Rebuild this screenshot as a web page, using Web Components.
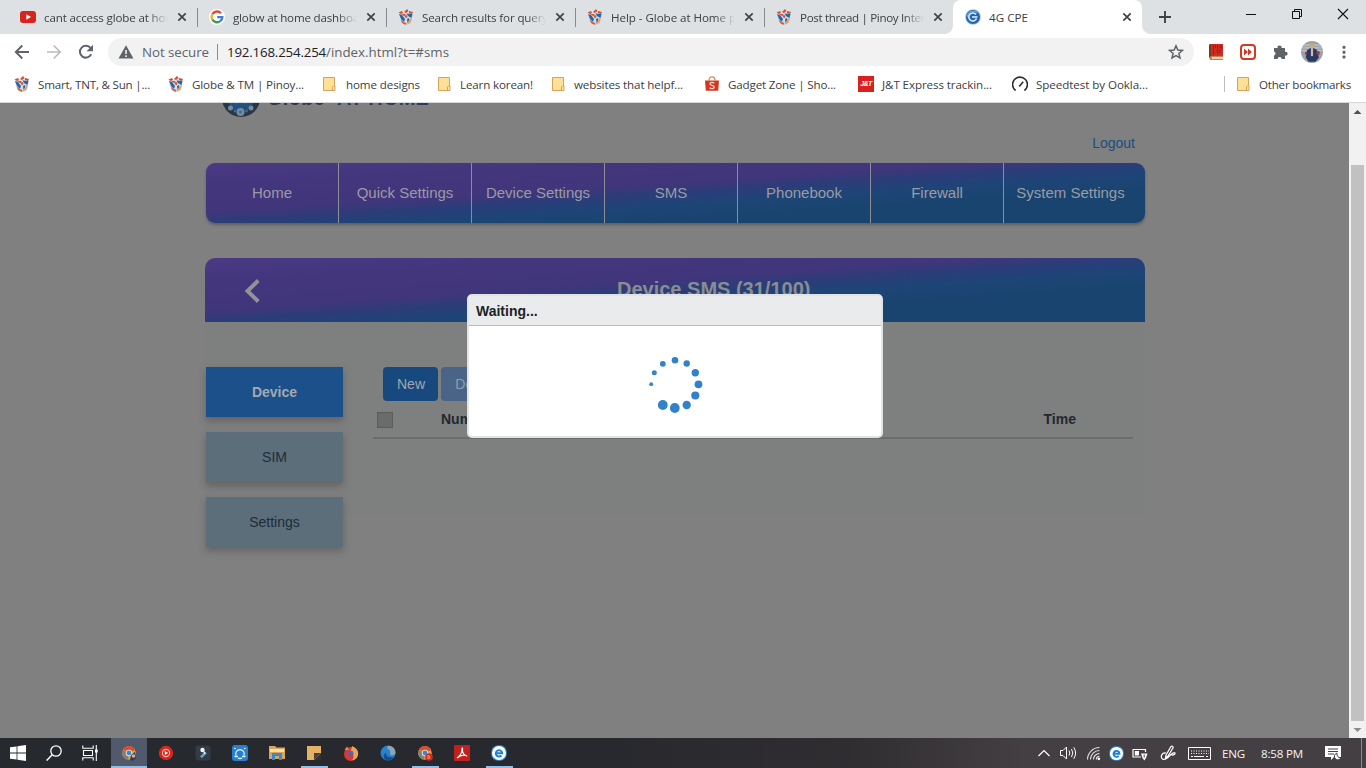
<!DOCTYPE html>
<html lang="en">
<head>
<meta charset="utf-8">
<title>4G CPE</title>
<style>
  html, body { margin: 0; height: 100%; overflow: hidden; background: #808080; }
  body { font-family: "Open Sans", "Noto Sans", sans-serif; font-size: 11.6px; color: #3c4043; }
</style>
</head>
<body>
<app-desktop></app-desktop>

<script>
const globeFav = `
  <path d="M.5 3.5L4 2l2 1.500L9 0l2 2 4 1-.5 3L14 10l-2 4-4 2-4-2-2-4z" fill="#d9dfe6"/>
  <path d="M.5 3.500L4 2l1 2-2 1zM6 3l3-3 1.500 2L8 4zM11 2l4 1-1 2-3-1zM3 5l4 0 1 1.500-2 .5z" fill="#d4502e"/>
  <path d="M1 5l3 1 3 4-1 3-3-3zM8.500 4.500L14.500 5l-1 4-2-1-1.500-1zM9 10l2-1 .5 3-2 2z" fill="#2468aa"/>
  <path d="M2.500 10.500l3 2.500 3 1-1 2-3.500-2zM6.500 7L8 9.500 9.500 8 9 6z" fill="#cf5a3c"/>
  <path d="M10 13l2.500-4 1.500.5-1.500 4.500L8.500 16z" fill="#dba577"/>`;

const chromeArt = `
  <circle cx="8" cy="8" r="6.8" fill="#e3a34a"/>
  <path d="M8 8L2 4.6A6.9 6.9 0 0 1 14.2 5z" fill="#d9502f"/>
  <path d="M8 8l-1 6.8A6.9 6.9 0 0 1 1.8 5z" fill="#8a7f6c"/>
  <circle cx="8" cy="8" r="3.2" fill="#e8eef6"/><circle cx="8" cy="8" r="2.4" fill="#3a85d0"/>`;

const eArt = `
  <rect x=".3" y=".3" width="15.4" height="15.4" rx="6.5" fill="#2c8ad6"/>
  <circle cx="8" cy="8" r="7" fill="#fff"/>
  <path d="M5 8.200h6.200A3.200 3.200 0 1 0 10.400 10.500" fill="none" stroke="#1f80cf" stroke-width="2"/>`;

const ICONS = {
  youtube: `<rect y="2" width="16" height="12" rx="3" fill="#d9231f"/><path d="M6.3 5.2v5.6L11 8z" fill="#fff"/>`,
  google: `<circle cx="8" cy="8" r="8" fill="#fff"/><g fill="none" stroke-width="2.4">
    <path d="M12 4.2A5.3 5.3 0 0 0 3.4 5.3" stroke="#df4a38"/><path d="M3.4 5.3a5.3 5.3 0 0 0 0 5.4" stroke="#efb336"/>
    <path d="M3.4 10.7a5.3 5.3 0 0 0 7.9 1.4" stroke="#3c9b57"/><path d="M8.2 8.1h5.1a5.3 5.3 0 0 1-2 4" stroke="#3f7fdc"/></g>`,
  forum: globeFav,
  cpe: `<circle cx="8" cy="8" r="7.800" fill="#9cc0e0"/><circle cx="8" cy="8" r="7" fill="#2467ab"/>
    <path d="M12.500 4A5.800 5.800 0 0 0 2.500 8" fill="none" stroke="#68a4d8" stroke-width="1.300"/>
    <path d="M11 5.500A4 4 0 1 0 11.500 9.500M7 8h5.500" fill="none" stroke="#e3eff9" stroke-width="1.500"/>`,
  close: `<path d="M4.3 4.3l7.4 7.4M11.7 4.3l-7.4 7.4" stroke="#3f4347" stroke-width="1.7"/>`,
  plus: `<path d="M8 2v12M2 8h12" stroke="#3f4347" stroke-width="1.9"/>`,
  min: `<path d="M3 8.5h10" stroke="#111"/>`,
  restore: `<path d="M3.5 5.5h7v7h-7zM5.5 5.5v-2h7v7h-2" fill="none" stroke="#111"/>`,
  winclose: `<path d="M3 3l10 10M13 3L3 13" stroke="#111" stroke-width="1.1"/>`,
  back: `<path d="M15 8H2M8.3 1.5L1.8 8l6.5 6.5" fill="none" stroke="#5f6368" stroke-width="1.9"/>`,
  forward: `<path d="M1 8h13M7.7 1.5L14.2 8l-6.5 6.5" fill="none" stroke="#b9bbbe" stroke-width="1.7"/>`,
  reload: `<path d="M13.2 10.2A5.9 5.9 0 1 1 12.6 4.2" fill="none" stroke="#5f6368" stroke-width="2"/><path d="M15 .8v6.4H8.6z" fill="#5f6368"/>`,
  warn: `<path d="M8 1.3L15.5 14.5H.5z" fill="#5f6368"/><path d="M8 6v4M8 11.3V13" stroke="#f1f1f1" stroke-width="1.6"/>`,
  star: `<path d="M8 1.8l1.8 4.2 4.6.4-3.5 3 1.1 4.5L8 11.5l-4 2.4 1.1-4.5-3.5-3L6.2 6z" fill="none" stroke="#5f6368" stroke-width="1.5"/>`,
  book: `<path d="M1.500 0H15v12H1.500z" fill="#d52b1e"/><path d="M1 1l2-1v13l-2 1z" fill="#6d3a33"/><path d="M1 13.500L3 12h12v1H4v1.500h11V16H2z" fill="#c9804f"/><path d="M4 13.200h11v1.300H4z" fill="#f0d8b4"/><path d="M5.500 1v10M7.500 1v3M9.500 1v4M12 1v3M13.500 2v3M8 7l5-1M9 9l4-1" stroke="#8e1a13" stroke-width=".8"/>`,
  skip: `<rect x="1" y="1" width="14" height="14" rx="3" fill="#fff" stroke="#d33a22" stroke-width="2"/><path d="M4 4.500L8 8l-4 3.500zM8 4.500L12 8l-4 3.500z" fill="#d33a22"/>`,
  puzzle: `<path d="M2 4h3.6a2 2 0 1 1 3.9 0H13v3.8a2 2 0 1 1 0 3.8V15H9.6a2 2 0 0 0-4 0H2v-3.6a2 2 0 0 0 0-3.9z" fill="#5f6368"/>`,
  avatar: `<circle cx="8" cy="8" r="8" fill="#9ea3aa"/><path d="M1 5h14M2 3h12M.5 7H4M12 7h3.500" stroke="#c9ccd1" stroke-width=".7"/>
    <path d="M4.500 6.500L7 5h2l2.500 1.500L13 12l-2.500 3h-5L3.500 12z" fill="#273a66"/><circle cx="8" cy="3.500" r="1.600" fill="#c9b06c"/>
    <path d="M7.200 5h1.600v6H7.200z" fill="#cdb9b2"/><path d="M11 7.500h2.500V10H11zM3 8h1.500v2H3z" fill="#8b3c44"/>`,
  dots: `<g fill="#5f6368"><rect x="6.5" y="1.8" width="3" height="3" rx="1"/><rect x="6.5" y="6.7" width="3" height="3" rx="1"/><rect x="6.5" y="11.6" width="3" height="3" rx="1"/></g>`,
  folder: `<path d="M2.5 1.5h11v13h-11z" fill="#ffe097" stroke="#d3a35c"/><path d="M11.5 14.5v-3.5l1-1h1.5v4.5z" fill="#ffe7ad" stroke="#d3a35c"/>`,
  shopee: `<path d="M1 4.5h14l-.8 10.2H1.8z" fill="#d6361f"/><path d="M5 4.5a3 3.600 0 0 1 6 0" fill="none" stroke="#d58b5c" stroke-width="1.300"/><path d="M10.300 7.200C9 6 6 6.200 6 7.800s4.300 1.400 4.300 3.200-3 2.200-4.700.7" fill="none" stroke="#f6d5c6" stroke-width="1.300"/>`,
  gauge: `<path d="M3.600 14.500a7.400 7.400 0 1 1 8.800 0" fill="none" stroke="#2b2d33" stroke-width="1.600"/><path d="M7.200 10.600l4-4.800" stroke="#2b2d33" stroke-width="1.600"/>`,

  win: `<path d="M0 2.3L6.6 1.4v6.2H0zM7.4 1.3L16 0v7.6H7.4zM0 8.4h6.6v6.2L0 13.7zM7.4 8.4H16V16l-8.6-1.2z" fill="#fff"/>`,
  search: `<circle cx="10" cy="6" r="5.2" fill="none" stroke="#fff" stroke-width="1.3"/><path d="M6.2 9.8L.6 15.6" stroke="#fff" stroke-width="1.4"/>`,
  tasks: `<path d="M.8.5v2.700h10.400V.5M.8 15.500v-2.700h10.400v2.700M1.500 5.500h9v5h-9zM14.300 0v16" fill="none" stroke="#fff" stroke-width="1.100"/><path d="M13 4.500h2.700v3H13z" fill="#fff"/>`,
  chrome: chromeArt + `<path d="M10 10l4-3 1 6-3 3-3-1z" fill="#29405f"/><circle cx="12.5" cy="11" r="1.8" fill="#d7b08e"/>`,
  chrome2: chromeArt + `<circle cx="12" cy="12" r="3.8" fill="#d42a20"/><path d="M11 14v-4l2 2-1 2" stroke="#f3b3a0" stroke-width=".8" fill="none"/>`,
  ytmusic: `<circle cx="8" cy="8" r="7.2" fill="#d8261e"/><circle cx="8" cy="8" r="3.600" fill="none" stroke="#f4c0a8" stroke-width="1.100"/><path d="M6.800 6v4L10.200 8z" fill="#fff"/>`,
  filmora: `<rect x=".5" y=".5" width="15" height="15" rx="3" fill="#333b46"/><path d="M5 11.500L9 7.500l3 .5-5 5z" fill="#69a9c4"/><circle cx="7.500" cy="5" r="2.200" fill="#f3f7fa"/><path d="M8 5l3 3-2 1.500z" fill="#e3ecf2"/>`,
  share: `<rect width="16" height="16" rx="3" fill="#2680cf"/><g fill="none" stroke="#e6f4ff" stroke-width="1.300"><path d="M4 10.500a4.300 4.300 0 1 1 8 0M2.500 11.500h3.500M10 11.500h3.500M6 13q2 1 4 0"/></g><circle cx="3" cy="3.500" r=".8" fill="#fff"/><circle cx="12.800" cy="3.500" r=".8" fill="#fff"/>`,
  explorer: `<path d="M0 1h6l1.500 1.500H16V14H0z" fill="#d9a75c"/><path d="M1 4h14v3H1z" fill="#ffe09a"/><path d="M3 15V8h10v7h-3v-4H6v4z" fill="#3d87c8"/>`,
  notes: `<path d="M1 1h14v9l-5 5H1z" fill="#e7b163"/><path d="M15 8v7H8z" fill="#34302d"/><path d="M8 8h7l-7 7z" fill="#4a4038"/>`,
  firefox: `<circle cx="8" cy="9" r="7" fill="#d93a2c"/><path d="M9 1c4 2 7 4.500 6 9-1 4-4 5-6 5 3-3 1-6-1-7C7 5 9 4 9 1z" fill="#e9a45c"/><path d="M1.500 5L4 1.500 6 5z" fill="#e38a47"/><circle cx="7.500" cy="8.500" r="3" fill="#6b5ba0"/>`,
  edge: `<circle cx="8" cy="8" r="7.500" fill="#2682cf"/><path d="M8 .8c5 0 8 3.500 7.500 7.700C14 11 10 10.500 10 9c1-3-1-5-3-5z" fill="#8ba7b4"/><path d="M6 8c0 4 3.500 5 8 4-2 3-5 4-8 3-3-1.500-3-6 0-7z" fill="#174f8a"/>`,
  acrobat: `<rect width="16" height="16" rx="1" fill="#c3201d"/><path d="M3 13c3-2 5-6 5-9 0-2 1-1 .5 1C8 8 11 11 13 11c-3-1.500-7-.5-10 2z" fill="none" stroke="#fff" stroke-width="1.100"/>`,
  ebadge: eArt,

  up: `<path d="M2.500 11L8 5.500l5.500 5.500" fill="none" stroke="#fff" stroke-width="1.200"/>`,
  sound: `<g fill="none" stroke="#fff"><path d="M.5 5.500h2.500l3.500-3.500v12L3 10.500H.5zM9 5.500q1.600 2.500 0 5M11.500 4q2.600 4 0 8M13.800 2.300q3.600 5.700 0 11.400"/></g>`,
  wifi: `<g fill="none" stroke="#fff" stroke-width="1.100"><path d="M2.500 14.500A12 12 0 0 1 14.500 2.500M5.500 14.500a9 9 0 0 1 9-9M8.500 14.500a6 6 0 0 1 6-6M11.300 14.500a3.200 3.200 0 0 1 3.200-3.200" opacity=".85"/></g><circle cx="13.800" cy="13.800" r="1.400" fill="#fff"/>`,
  battery: `<path d="M13.500 7V4.500H1V12h8" fill="none" stroke="#fff" stroke-width="1.200"/><path d="M2.800 6H7v4.500H2.800zM9 8.500h6.500L14 13l-1.700 2.500L10.500 13z" fill="#fff"/><path d="M12.200 9.500v3" stroke="#433f42"/>`,
  pen: `<g fill="none" stroke="#fff" stroke-width="1.200"><path d="M6 10L11 1.500q2-1 2.200 1L8 11l-2.500 2zM6 8c-4-1-6 4-3.500 6 3 2 6-2 8-4s5-3 4.500-1.500-2.500 2-3.500 1"/></g>`,
};

// Inline SVG icon: name picks the drawing, size is the square side in pixels
class UiIcon extends HTMLElement {
  constructor() {
    super();
    this.attachShadow({ mode: 'open' });
  }

  connectedCallback() {
    const size = this.getAttribute('size') || 16;
    this.shadowRoot.innerHTML = `
      <style>
        :host { display: block; flex: none; width: ${size}px; height: ${size}px; }
        svg { display: block; }
      </style>
      <svg width="${size}" height="${size}" viewBox="0 0 16 16">${ICONS[this.getAttribute('name')] || ''}</svg>
    `;
  }
}
customElements.define('ui-icon', UiIcon);

// One line of text, tracked so that it is exactly "w" pixels wide
class UiLabel extends HTMLElement {
  constructor() {
    super();
    this.attachShadow({ mode: 'open' });
    this.shadowRoot.innerHTML = `
      <style>
        :host { display: block; flex: none; white-space: nowrap; }
        span { display: inline-block; }
      </style>
      <span><slot></slot></span>
    `;
  }

  connectedCallback() {
    const w = parseFloat(this.getAttribute('w'));
    if (!w) return;
    const span = this.shadowRoot.querySelector('span');
    const count = this.textContent.length;
    span.style.letterSpacing = `${(w - span.getBoundingClientRect().width) / count}px`;
    this.style.width = `${w}px`;
  }
}

class BrowserTab extends HTMLElement {
  constructor() {
    super();
    this.attachShadow({ mode: 'open' });
  }

  connectedCallback() {
    this.shadowRoot.innerHTML = `
      <style>
        :host {
          display: flex;
          align-items: center;
          box-sizing: border-box;
          position: relative;
          width: 189px;
          height: 34px;
          padding: 0 7px 0 12px;
        }
        .title {
          flex: 1;
          min-width: 0;
          margin-left: 8px;
          overflow: hidden;
          -webkit-mask-image: linear-gradient(to right, #000 84%, transparent);
        }
        ui-icon[name="close"] { margin-left: 6px; }
        :host(:not([active]))::after {
          content: "";
          position: absolute;
          right: -1px;
          top: 8px;
          height: 19px;
          border-right: 1px solid #868b90;
        }
        :host([last])::after { display: none; }
        :host([active]) { background: #fff; border-radius: 8px 8px 0 0; }
        :host([active]) .title { -webkit-mask-image: none; }
        /* flared feet of the selected tab */
        :host([active])::before {
          content: "";
          position: absolute;
          left: -8px;
          right: -8px;
          bottom: 0;
          height: 8px;
          background:
            radial-gradient(circle at 0 0, transparent 7.500px, #fff 8px) left / 8px 8px no-repeat,
            radial-gradient(circle at 100% 0, transparent 7.500px, #fff 8px) right / 8px 8px no-repeat;
        }
      </style>
      <ui-icon name="${this.getAttribute('icon')}"></ui-icon>
      <div class="title"><slot></slot></div>
      <ui-icon name="close"></ui-icon>
    `;
  }
}
customElements.define('browser-tab', BrowserTab);

class BookmarkItem extends HTMLElement {
  constructor() {
    super();
    this.attachShadow({ mode: 'open' });
  }

  connectedCallback() {
    const icon = this.getAttribute('icon');
    const art = icon ? `<ui-icon name="${icon}"></ui-icon>` : '<span class="jt">J&amp;T</span>';
    this.shadowRoot.innerHTML = `
      <style>
        :host { display: flex; align-items: center; gap: 8px; }
        .jt {
          width: 16px;
          height: 16px;
          background: #d8201f;
          color: #fff;
          font: italic bold 7px/16px "Liberation Sans", sans-serif;
          text-align: center;
          letter-spacing: -0.5px;
        }
      </style>
      ${art}<slot></slot>
    `;
  }
}
customElements.define('bookmark-item', BookmarkItem);

class BrowserChrome extends HTMLElement {
  constructor() {
    super();
    this.attachShadow({ mode: 'open' });
    this.shadowRoot.innerHTML = `
      <style>
        :host { display: block; height: 103px; background: #fff; box-sizing: border-box; border-bottom: 1px solid #d5d7d9; }
        .tabs { display: flex; align-items: center; height: 34px; padding-left: 8px; background: #dee1e4; }
        .new { margin-left: 15px; }
        .window { display: flex; margin: -6px 0 0 auto; }
        .window div { width: 46px; display: flex; justify-content: center; }
        .bar { display: flex; align-items: center; height: 35px; padding: 0 14px; }
        .bar > ui-icon { margin-right: 16px; }
        .omni {
          display: flex;
          align-items: center;
          flex: none;
          box-sizing: border-box;
          width: 1086px;
          height: 28px;
          margin: 1px 14px 0 -2px;
          padding: 0 10px;
          border-radius: 14px;
          background: #f2f2f2;
          font-size: 13.3px;
          color: #5f6368;
        }
        .omni .warn { margin-right: 8px; }
        .omni .rule { width: 1px; height: 16px; margin: 0 9px 0 8px; background: #8a8d91; }
        .host { color: #202124; }
        .omni .star { margin-left: auto; }
        .ext { display: flex; align-items: center; }
        .ext ui-icon { margin-right: 16px; }
        .marks { display: flex; align-items: center; height: 30px; padding: 0 15px 0 14px; }
        .side { margin-left: auto; padding-left: 10px; border-left: 1px solid #bbbdc0; }
      </style>
      <div class="tabs">
        <browser-tab icon="youtube"><ui-label w="132">cant access globe at hom</ui-label></browser-tab>
        <browser-tab icon="google"><ui-label w="126">globw at home dashboa</ui-label></browser-tab>
        <browser-tab icon="forum"><ui-label w="126">Search results for query</ui-label></browser-tab>
        <browser-tab icon="forum"><ui-label w="125">Help - Globe at Home p</ui-label></browser-tab>
        <browser-tab icon="forum" last><ui-label w="125">Post thread | Pinoy Inter</ui-label></browser-tab>
        <browser-tab icon="cpe" active><ui-label w="39">4G CPE</ui-label></browser-tab>
        <ui-icon class="new" name="plus"></ui-icon>
        <div class="window">
          <div><ui-icon name="min"></ui-icon></div>
          <div><ui-icon name="restore"></ui-icon></div>
          <div><ui-icon name="winclose"></ui-icon></div>
        </div>
      </div>
      <div class="bar">
        <ui-icon name="back"></ui-icon>
        <ui-icon name="forward"></ui-icon>
        <ui-icon name="reload"></ui-icon>
        <div class="omni">
          <ui-icon class="warn" name="warn"></ui-icon>
          <ui-label w="67">Not secure</ui-label>
          <div class="rule"></div>
          <ui-label class="host" w="99">192.168.254.254</ui-label>
          <ui-label w="123">/index.html?t=#sms</ui-label>
          <ui-icon class="star" name="star"></ui-icon>
        </div>
        <div class="ext">
          <ui-icon name="book"></ui-icon>
          <ui-icon name="skip"></ui-icon>
          <ui-icon name="puzzle" style="margin-right: 13px"></ui-icon>
          <ui-icon name="avatar" size="22" style="margin-right: 13px"></ui-icon>
          <ui-icon name="dots" style="margin: 0"></ui-icon>
        </div>
      </div>
      <div class="marks">
        <bookmark-item icon="forum" style="margin-right: 18px"><ui-label w="112">Smart, TNT, &amp; Sun |...</ui-label></bookmark-item>
        <bookmark-item icon="forum" style="margin-right: 17px"><ui-label w="112">Globe &amp; TM | Pinoy...</ui-label></bookmark-item>
        <bookmark-item icon="folder" style="gap: 9px; margin-right: 16px"><ui-label w="74">home designs</ui-label></bookmark-item>
        <bookmark-item icon="folder" style="margin-right: 17px"><ui-label w="73">Learn korean!</ui-label></bookmark-item>
        <bookmark-item icon="folder" style="margin-right: 21px"><ui-label w="109">websites that helpf...</ui-label></bookmark-item>
        <bookmark-item icon="shopee" style="margin-right: 22px"><ui-label w="108">Gadget Zone | Sho...</ui-label></bookmark-item>
        <bookmark-item style="margin-right: 20px"><ui-label w="110">J&amp;T Express trackin...</ui-label></bookmark-item>
        <bookmark-item icon="gauge"><ui-label w="112">Speedtest by Ookla...</ui-label></bookmark-item>
        <bookmark-item class="side" icon="folder"><ui-label w="92">Other bookmarks</ui-label></bookmark-item>
      </div>
    `;
  }
}

class PageNav extends HTMLElement {
  constructor() {
    super();
    this.attachShadow({ mode: 'open' });
    const items = ['Home', 'Quick Settings', 'Device Settings', 'SMS', 'Phonebook', 'Firewall', 'System Settings'];
    this.shadowRoot.innerHTML = `
      <style>
        :host {
          display: flex;
          height: 60px;
          margin-left: 1px;
          border-radius: 9px;
          background: var(--brand);
          box-shadow: 0 2px 3px rgba(40, 45, 50, 0.4);
          font-size: 15px;
          color: #9b9ba3;
        }
        a { box-sizing: border-box; width: 133px; line-height: 60px; text-align: center; border-right: 1px solid #8d8d98; }
        a:last-child { border: 0; }
      </style>
      ${items.map(item => `<a>${item}</a>`).join('')}
    `;
  }
}
customElements.define('page-nav', PageNav);

class SideButton extends HTMLElement {
  constructor() {
    super();
    this.attachShadow({ mode: 'open' });
    this.shadowRoot.innerHTML = `
      <style>
        :host {
          display: block;
          height: 50px;
          line-height: 50px;
          text-align: center;
          background: #5c6e79;
          color: #1c2c3a;
          box-shadow: 0 4px 7px rgba(70, 64, 64, 0.45);
        }
        :host([active]) { background: #1b508a; color: #a3a9b0; font-weight: bold; }
      </style>
      <slot></slot>
    `;
  }
}
customElements.define('side-button', SideButton);

class WaitDialog extends HTMLElement {
  constructor() {
    super();
    this.attachShadow({ mode: 'open' });
    const dots = [
      [24, 0.3, 3.3], [35.7, 3.5, 3.2], [44.3, 12.8, 3.7], [47.5, 24.3, 3.9],
      [44.3, 35.5, 4.1], [35.7, 45, 4.2], [23.8, 48, 4.9], [11.8, 45, 4.9],
      [0.2, 24.2, 1.9], [3.3, 12.8, 2.5], [11.8, 3.8, 2.9],
    ];
    this.shadowRoot.innerHTML = `
      <style>
        :host {
          display: flex;
          flex-direction: column;
          box-sizing: border-box;
          width: 416px;
          height: 144px;
          border: 2px solid #e1e3e5;
          border-radius: 5px;
          background: #fff;
        }
        header {
          height: 29px;
          line-height: 30px;
          padding-left: 7px;
          background: #e9ebed;
          border-bottom: 1px solid #b9bbbd;
          font-weight: bold;
          color: #222;
        }
        svg { display: block; margin: 29px 0 0 176px; }
      </style>
      <header><slot></slot></header>
      <svg width="62" height="62" viewBox="-6 -5 62 62" fill="#3181cb">
        ${dots.map(([x, y, r]) => `<circle cx="${x}" cy="${y}" r="${r}"/>`).join('')}
      </svg>
    `;
  }
}
customElements.define('wait-dialog', WaitDialog);

class RouterPage extends HTMLElement {
  constructor() {
    super();
    this.attachShadow({ mode: 'open' });
    this.shadowRoot.innerHTML = `
      <style>
        :host {
          --brand: linear-gradient(to bottom right, #4a3a84 0%, #43367d 20%, #41357b 41%, #2b3d79 50%, #1d4577 60%, #19446f 72%, #19446f 100%);
          display: flex;
          position: relative;
          flex: 1;
          min-height: 0;
          overflow: hidden;
          background: #808080;
          font-family: "Liberation Sans", Arial, sans-serif;
          font-size: 14px;
        }
        .page { width: 940px; margin: 0 204px 0 205px; }
        .head { display: flex; height: 60px; align-items: flex-start; padding-left: 16px; box-sizing: border-box; }
        .head svg { margin-top: -25px; }
        .brand { display: flex; gap: 12px; margin: -16px 0 0 6px; font-size: 20px; line-height: 23px; font-weight: bold; color: #2f3849; }
        .brand ui-label + ui-label { color: #2c3a60; }
        .logout { position: absolute; top: 32px; right: 231px; color: #164f80; line-height: 16px; }
        .panel { margin-top: 35px; height: 257px; background: #7e7f7f; border-radius: 10px 10px 0 0; }
        .title { display: flex; align-items: center; height: 64px; border-radius: 10px 10px 0 0; background: var(--brand); }
        .title svg { margin: 1px 0 0 39px; }
        h1 { margin: -2px 0 0 357px; font-size: 20px; color: #8c8c93; }
        .body { display: flex; padding: 45px 12px 0 1px; }
        nav { display: flex; flex-direction: column; gap: 15px; width: 137px; }
        .main { flex: 1; margin-left: 30px; }
        .actions { display: flex; gap: 3px; padding-left: 10px; }
        .btn { box-sizing: border-box; width: 55px; padding-left: 1px; line-height: 34px; border-radius: 4px; text-align: center; background: #17497e; color: #a1a7ad; }
        .btn.off { width: 68px; background: #4a6487; color: #8f9fb2; }
        .row { display: flex; align-items: center; height: 36px; border-bottom: 2px solid #6c6d6d; font-weight: bold; color: #22282e; }
        .row i { width: 14px; height: 14px; border: 1px solid #5c5c5c; background: #6b6b6b; margin: 1px 48px 0 4px; }
        .row b:last-child { margin-left: auto; margin-right: 57px; }
        .scroll { display: flex; flex-direction: column; align-items: center; width: 17px; background: #f1f1f1; }
        .thumb { width: 13px; height: 556px; margin-top: 45px; background: #c1c1c1; }
        .arrow { height: 17px; display: block; }
        wait-dialog { position: absolute; left: 467px; top: 191px; }
      </style>
      <div class="page">
        <div class="head">
          <svg width="40" height="40" viewBox="0 0 40 40">
            <circle cx="20" cy="20" r="19" fill="#283544"/>
            <circle cx="20" cy="20" r="12.500" fill="#27608f"/>
            <path d="M8 22l7 8 5-3 5 3 7-8" fill="none" stroke="#1d5384" stroke-width="5"/>
            <g fill="#768a99"><circle cx="19.500" cy="34" r="4"/><circle cx="9.500" cy="30" r="2.500"/><circle cx="30" cy="30" r="2.500"/></g>
            <g fill="#3a6c93"><circle cx="19.500" cy="34" r="1.500"/><circle cx="14" cy="33" r="1.500"/><circle cx="25.500" cy="33" r="1.500"/></g>
          </svg>
          <div class="brand"><ui-label w="58">Globe</ui-label><ui-label w="92">AT HOME</ui-label></div>
        </div>
        <a class="logout">Logout</a>
        <page-nav></page-nav>
        <div class="panel">
          <div class="title">
            <svg width="16" height="24" viewBox="0 0 16 24"><path d="M14.300 1.500L3.500 12l10.800 10.500" fill="none" stroke="#929297" stroke-width="4"/></svg>
            <h1>Device SMS (31/100)</h1>
          </div>
          <div class="body">
            <nav>
              <side-button active>Device</side-button>
              <side-button>SIM</side-button>
              <side-button>Settings</side-button>
            </nav>
            <div class="main">
              <div class="actions"><div class="btn">New</div><div class="btn off">Delete</div></div>
              <div class="row"><i></i><b>Number</b><b>Time</b></div>
            </div>
          </div>
        </div>
      </div>
      <div class="scroll">
        <svg class="arrow" width="17"><path d="M4.500 11L8.500 7l4 4z" fill="#505050"/></svg>
        <div class="thumb"></div>
        <svg class="arrow" width="17"><path d="M4.500 7l4 4 4-4z" fill="#8a8a8a"/></svg>
      </div>
      <wait-dialog>Waiting...</wait-dialog>
    `;
  }
}

class TaskBar extends HTMLElement {
  constructor() {
    super();
    this.attachShadow({ mode: 'open' });
    const apps = ['ytmusic', 'filmora', 'share', 'explorer', 'notes', 'firefox', 'edge', 'chrome2', 'acrobat', 'ebadge'];
    const open = ['notes', 'chrome2', 'ebadge'];
    this.shadowRoot.innerHTML = `
      <style>
        :host {
          display: flex;
          height: 30px;
          background: linear-gradient(to right, #26292e, #28292e 45%, #302d31 62%, #433f42 75%, #433f42);
          color: #f5f5f5;
        }
        .cell { display: flex; align-items: center; justify-content: center; box-sizing: border-box; width: 36px; }
        .current { margin: 0 0.5px 0 3px; background: #515a6d; box-shadow: inset 0 -2px #8fbfe8; }
        .app { width: 37px; }
        .open { background: linear-gradient(#8fbfe8, #8fbfe8) center bottom / 27px 2px no-repeat; }
        .tray { display: flex; align-items: center; margin-left: auto; }
        .tray > * { margin-right: 8px; }
        .end { height: 30px; border-left: 1px solid #8b898b; margin-right: 4px; }
      </style>
      <div class="cell"><ui-icon name="win"></ui-icon></div>
      <div class="cell"><ui-icon name="search"></ui-icon></div>
      <div class="cell"><ui-icon name="tasks"></ui-icon></div>
      <div class="cell current"><ui-icon name="chrome"></ui-icon></div>
      ${apps.map(app => `<div class="cell app ${open.includes(app) ? 'open' : ''}"><ui-icon name="${app}"></ui-icon></div>`).join('')}
      <div class="tray">
        <ui-icon name="up"></ui-icon>
        <ui-icon name="sound" style="margin-right: 9px"></ui-icon>
        <ui-icon name="wifi"></ui-icon>
        <ui-icon name="ebadge" size="15"></ui-icon>
        <ui-icon name="battery" style="margin-right: 12px"></ui-icon>
        <ui-icon name="pen" style="margin-right: 12px"></ui-icon>
        <svg width="23" height="13" viewBox="0 0 23 13" fill="none" stroke="#fff" style="margin-right: 11px">
          <path d="M.5.5h22v12H.5z"/>
          <path d="M3 4h18M3 6.500h18" stroke-dasharray="1 1.500"/>
          <path d="M3 9.500h2M6 9.500h10M18 9.500h2"/>
        </svg>
        <ui-label w="23" style="margin-right: 16px">ENG</ui-label>
        <ui-label w="42" style="margin-right: 22px">8:58 PM</ui-label>
        <svg width="17" height="17" viewBox="0 0 17 17" style="margin-right: 19px">
          <path d="M0 1h16v11H9l-3 3v-3H0z" fill="#fff"/>
          <path d="M3 4h10M3 6.500h10M3 9h6" stroke="#433f42"/>
          <path d="M12 8a3.500 3.500 0 1 0 4 5 4 4 0 0 1-4-5z" fill="#fff" stroke="#433f42"/>
        </svg>
        <div class="end"></div>
      </div>
    `;
  }
}

class AppDesktop extends HTMLElement {
  constructor() {
    super();
    this.attachShadow({ mode: 'open' });
    this.shadowRoot.innerHTML = `
      <style>
        :host { display: flex; flex-direction: column; width: 1366px; height: 768px; overflow: hidden; }
      </style>
      <browser-chrome></browser-chrome>
      <router-page></router-page>
      <task-bar></task-bar>
    `;
  }
}

customElements.define('app-desktop', AppDesktop);
customElements.define('browser-chrome', BrowserChrome);
customElements.define('router-page', RouterPage);
customElements.define('task-bar', TaskBar);
// labels measure themselves, so they come last
customElements.define('ui-label', UiLabel);
</script>
</body>
</html>
